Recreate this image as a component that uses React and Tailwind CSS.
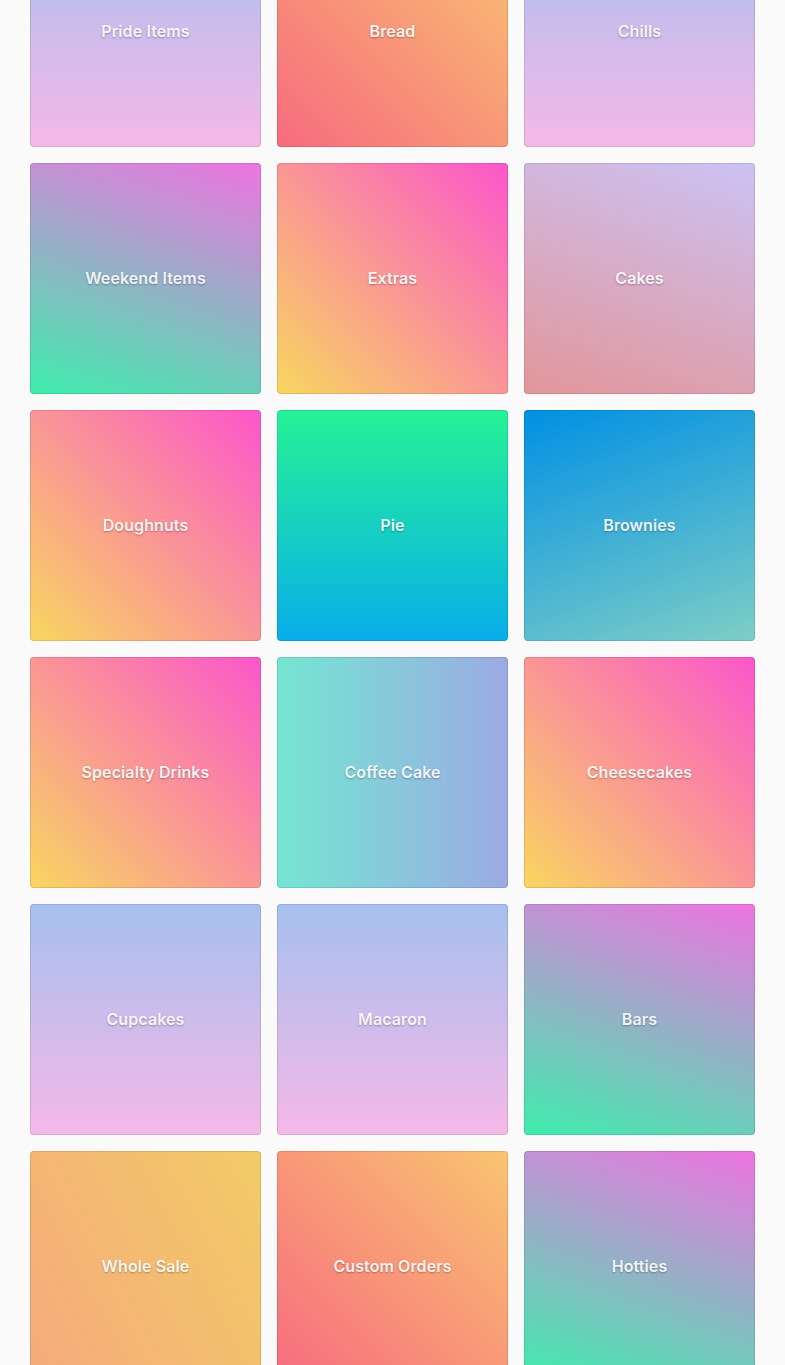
import React from "react";

const categories = [
  { name: "Pride Items", bg: "bg-[linear-gradient(to_top,#f5b8e8_0%,#a6c0ee_100%)]" },
  { name: "Bread", bg: "bg-[linear-gradient(45deg,#f76b7f_0%,#f9c470_100%)]" },
  { name: "Chills", bg: "bg-[linear-gradient(to_top,#f5b8e8_0%,#a6c0ee_100%)]" },
  { name: "Weekend Items", bg: "bg-[linear-gradient(19deg,#3eecac_0%,#ee74e1_100%)]" },
  { name: "Extras", bg: "bg-[linear-gradient(45deg,#f8d660_0%,#fc56cb_100%)]" },
  { name: "Cakes", bg: "bg-[linear-gradient(19deg,#e2969a_0%,#ccc2f4_100%)]" },
  { name: "Doughnuts", bg: "bg-[linear-gradient(45deg,#f8d660_0%,#fc56cb_100%)]" },
  { name: "Pie", bg: "bg-[linear-gradient(0deg,#08aeea_0%,#26f296_100%)]" },
  { name: "Brownies", bg: "bg-[linear-gradient(160deg,#0090e4_0%,#7ecec6_100%)]" },
  { name: "Specialty Drinks", bg: "bg-[linear-gradient(45deg,#f8d660_0%,#fc56cb_100%)]" },
  { name: "Coffee Cake", bg: "bg-[linear-gradient(to_right,#74e6d2_0%,#9caae4_100%)]" },
  { name: "Cheesecakes", bg: "bg-[linear-gradient(45deg,#f8d660_0%,#fc56cb_100%)]" },
  { name: "Cupcakes", bg: "bg-[linear-gradient(to_top,#f5b8e8_0%,#a6c0ee_100%)]" },
  { name: "Macaron", bg: "bg-[linear-gradient(to_top,#f5b8e8_0%,#a6c0ee_100%)]" },
  { name: "Bars", bg: "bg-[linear-gradient(19deg,#3eecac_0%,#ee74e1_100%)]" },
  { name: "Whole Sale", bg: "bg-[linear-gradient(62deg,#f5aa7c_0%,#f2cb66_100%)]" },
  { name: "Custom Orders", bg: "bg-[linear-gradient(45deg,#f76b7f_0%,#f9c470_100%)]" },
  { name: "Hotties", bg: "bg-[linear-gradient(19deg,#3eecac_0%,#ee74e1_100%)]" },
];

const CategoryCard = ({ name, bg }) => (
  <div
    className={`${bg} bg-origin-border h-[231px] rounded border border-black/10 flex items-center justify-center pb-px`}
  >
    <span className="text-white/90 text-base font-semibold tracking-[0.1px] [text-shadow:0_1px_2px_rgba(0,0,0,0.3)]">
      {name}
    </span>
  </div>
);

export default function App() {
  return (
    <div className="min-h-screen bg-[#fafafa] font-['Inter',sans-serif] overflow-hidden">
      <div className="px-[30px] mt-[-84px] grid grid-cols-3 gap-4">
        {categories.map((c) => (
          <CategoryCard key={c.name} name={c.name} bg={c.bg} />
        ))}
      </div>
    </div>
  );
}
